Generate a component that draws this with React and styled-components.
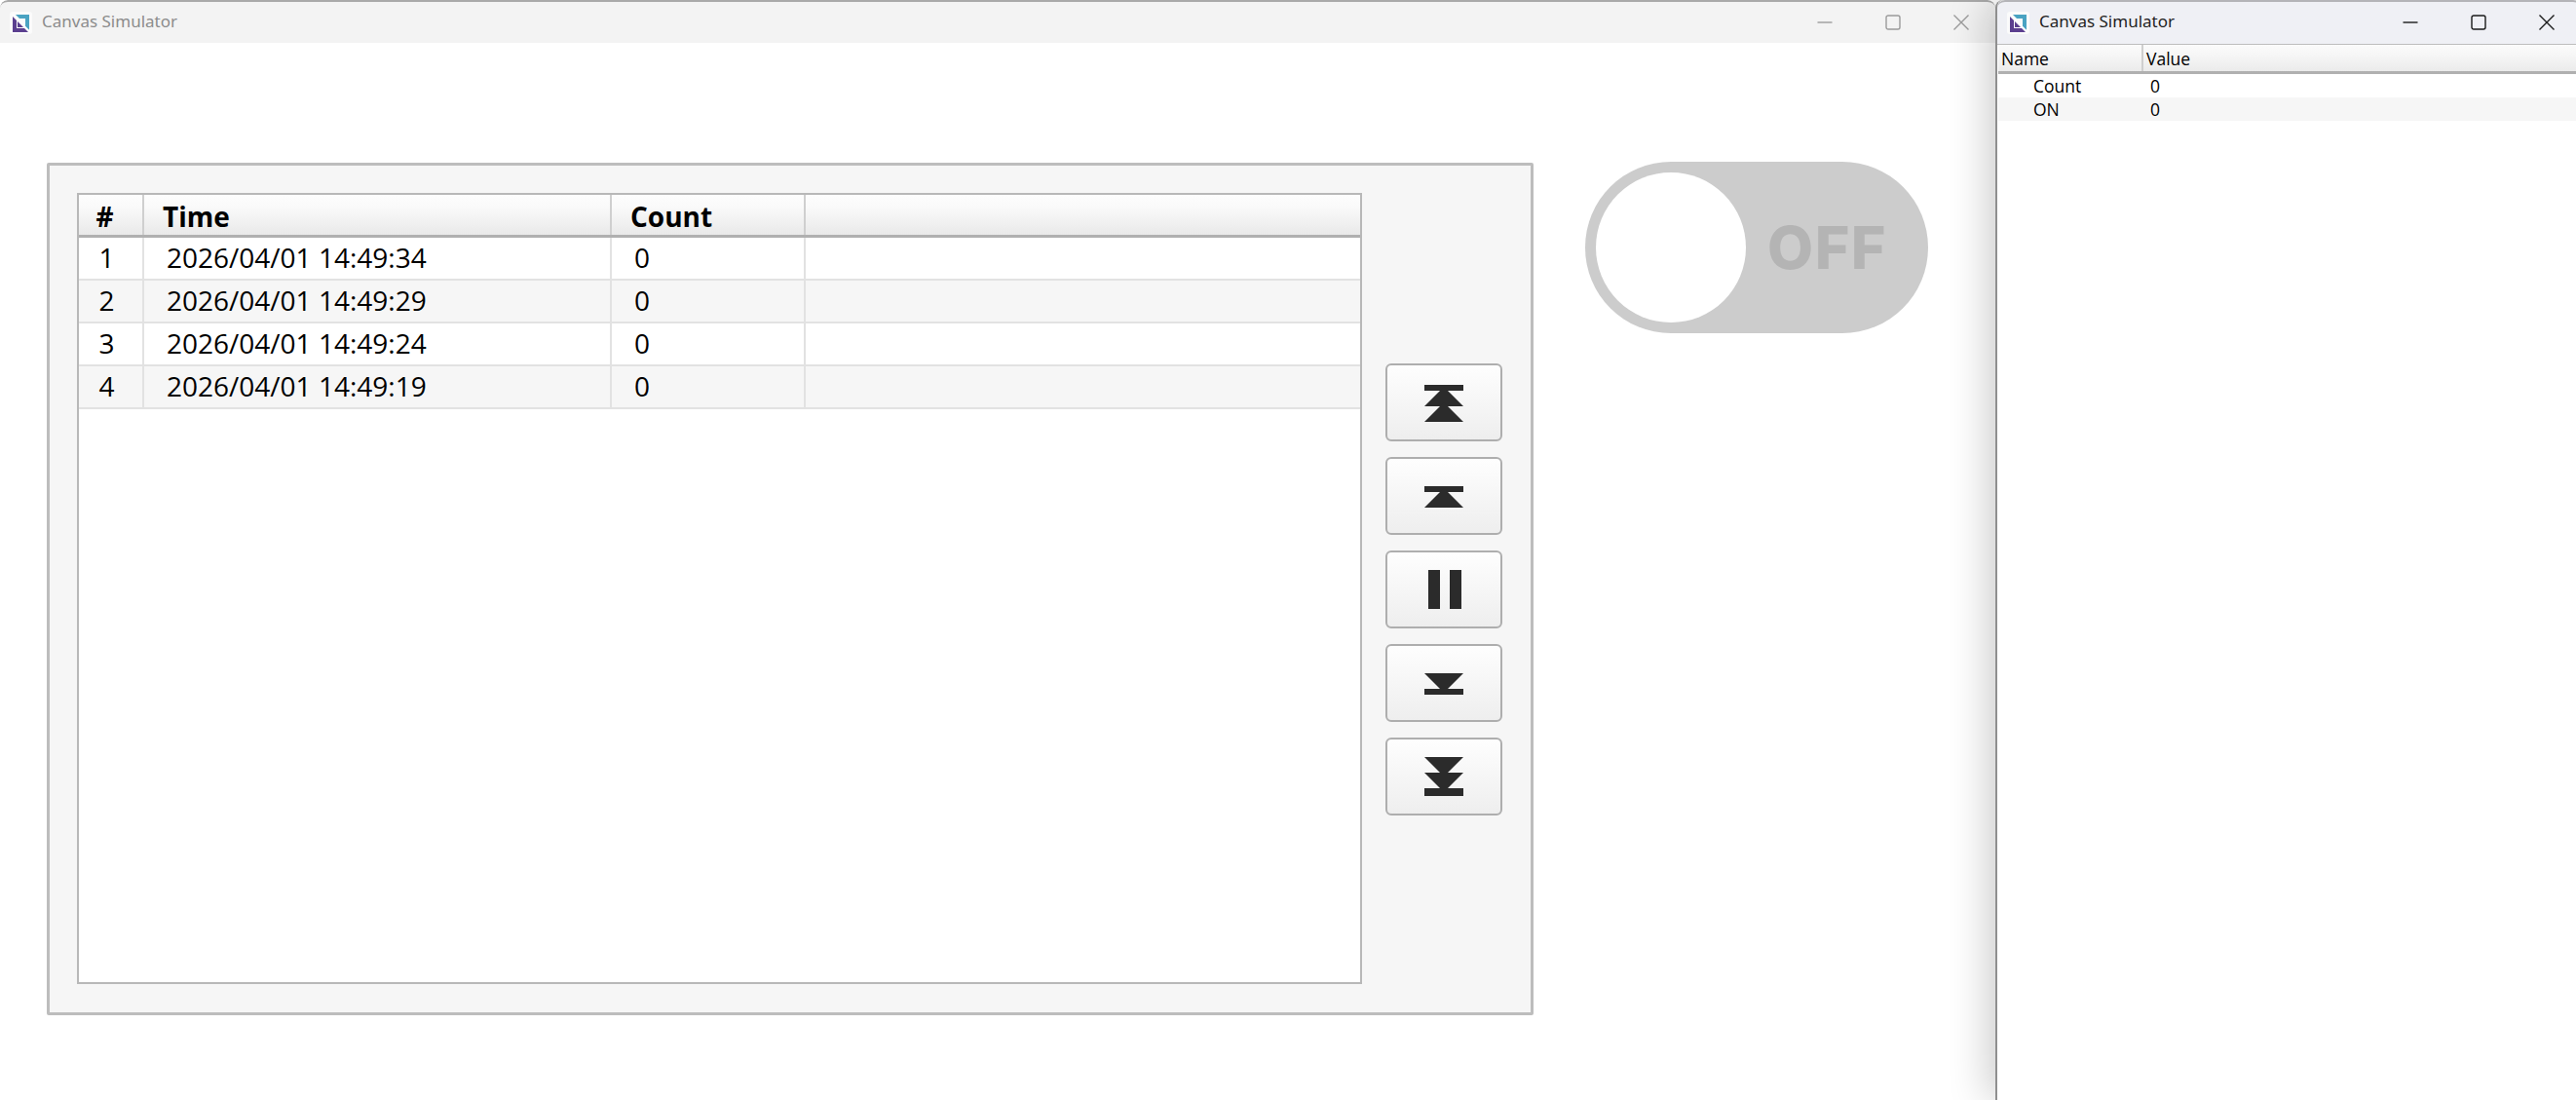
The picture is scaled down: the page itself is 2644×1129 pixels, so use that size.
import React from 'react';
import styled, { createGlobalStyle } from 'styled-components';

const GlobalStyle = createGlobalStyle`
  html, body {
    margin: 0;
    padding: 0;
    background: #fff;
    overflow: hidden;
  }
  * {
    box-sizing: border-box;
  }
`;

const Desktop = styled.div`
  display: flex;
  width: 2644px;
  height: 1129px;
  overflow: hidden;
  font-family: "Open Sans", "Noto Sans", sans-serif;
  color: #000;
`;

const Window = styled.div`
  flex: ${(p) => (p.$side ? '0 0 601px' : '0 0 2048px')};
  display: flex;
  flex-direction: column;
  min-width: 0;
  background: #fff;
  overflow: hidden;
  border-top-left-radius: 8px;
  border-top-right-radius: 8px;
  position: relative;
  z-index: ${(p) => (p.$side ? 1 : 0)};
  ${(p) =>
    p.$side &&
    `
    overflow: visible;
    border-left: 2px solid #8f8f8f;
    box-shadow: -8px 0 40px rgba(0, 0, 0, 0.2);
  `}
`;

const TitleBar = styled.div`
  flex: 0 0 44px;
  display: flex;
  align-items: center;
  border-top: 2px solid ${(p) => (p.$active ? '#b4b4b8' : '#a9a9a9')};
  background: ${(p) => (p.$active ? '#eff0f5' : '#f3f3f3')};
  border-bottom: ${(p) => (p.$active ? '1px solid #bdbdbd' : 'none')};
  border-top-left-radius: 8px;
  border-top-right-radius: 8px;
  padding-left: 10px;
  padding-bottom: ${(p) => (p.$active ? '1px' : '0')};
`;

const AppIcon = styled.svg`
  width: 23px;
  height: 23px;
  flex: none;
`;

const TitleText = styled.span`
  margin-left: 10px;
  padding-bottom: 3px;
  font-family: "Noto Sans", "Open Sans", sans-serif;
  font-size: 17px;
  color: ${(p) => (p.$active ? '#1f1f1f' : '#8c8c8c')};
  flex: 1;
`;

const WindowControls = styled.div`
  display: flex;
  align-items: center;
`;

const ControlButton = styled.div`
  width: 70px;
  height: 42px;
  display: flex;
  align-items: center;
  justify-content: center;
  color: ${(p) => (p.$active ? '#1a1a1a' : '#9b9b9b')};
`;

const ControlIcon = styled.svg`
  width: 16px;
  height: 16px;
  fill: none;
  stroke: currentColor;
  stroke-width: 1.4;
`;

const Content = styled.div`
  flex: 1;
  display: flex;
  align-items: flex-start;
  gap: 53px;
  padding: 123px 0 0 48px;
`;

const Panel = styled.div`
  flex: 0 0 1526px;
  height: 875px;
  display: flex;
  align-items: center;
  gap: 24px;
  padding: 28px;
  background: #f6f6f6;
  border: 3px solid #bdbdbd;
  border-radius: 2px;
`;

const TablePane = styled.div`
  flex: 0 0 1319px;
  height: 812px;
  align-self: flex-start;
  display: flex;
  flex-direction: column;
  background: #fff;
  border: 2px solid #b8b8b8;
`;

const HeaderRow = styled.div`
  flex: 0 0 44px;
  display: flex;
  background: linear-gradient(#fdfdfd, #fafafa 30%, #e9e9e9);
  border-bottom: 3px solid #b0b0b0;
`;

const BodyRow = styled.div`
  flex: 0 0 44px;
  display: flex;
  background: ${(p) => (p.$odd ? '#f6f6f6' : '#fff')};
  border-bottom: 2px solid #e2e2e2;
`;

const columnWidths = { index: 67, time: 480, count: 199, rest: 569 };

const HeaderCell = styled.div`
  flex: 0 0 ${(p) => columnWidths[p.$col]}px;
  display: flex;
  align-items: center;
  justify-content: ${(p) => (p.$col === 'index' ? 'center' : 'flex-start')};
  padding: ${(p) => (p.$col === 'index' ? '2px 12px 0 0' : '2px 0 0 19px')};
  font-size: 28px;
  font-weight: 700;
  border-right: ${(p) => (p.$col === 'rest' ? 'none' : '2px solid #cfcfcf')};
`;

const Cell = styled.div`
  flex: 0 0 ${(p) => columnWidths[p.$col]}px;
  display: flex;
  align-items: center;
  justify-content: ${(p) => (p.$col === 'index' ? 'center' : 'flex-start')};
  padding: ${(p) => (p.$col === 'index' ? '0 8px 2px 0' : '0 0 2px 23px')};
  font-size: 28px;
  border-right: ${(p) => (p.$col === 'rest' ? 'none' : '2px solid #e2e2e2')};
`;

const ButtonStack = styled.div`
  display: flex;
  flex-direction: column;
  gap: 16px;
`;

const NavButton = styled.div`
  width: 120px;
  height: 80px;
  display: flex;
  align-items: center;
  justify-content: center;
  background: linear-gradient(#fefefe, #eeeeee);
  border: 2px solid #aeaeae;
  border-radius: 6px;
`;

const NavIcon = styled.svg`
  width: 40px;
  height: 42px;
  fill: #2b2b2b;
`;

const Toggle = styled.div`
  flex: none;
  width: 352px;
  height: 176px;
  margin-top: -1px;
  padding: 11px;
  display: flex;
  align-items: center;
  background: #cccccc;
  border-radius: 88px;
`;

const ToggleKnob = styled.div`
  width: 154px;
  height: 154px;
  border-radius: 50%;
  background: #fff;
`;

const ToggleLabel = styled.span`
  margin-left: 22px;
  font-family: Inter, "Open Sans", sans-serif;
  font-size: 61px;
  line-height: 1;
  letter-spacing: 1.5px;
  font-weight: 800;
  color: #b4b4b4;
`;

const PropHeader = styled.div`
  flex: 0 0 30px;
  display: flex;
  background: linear-gradient(#fbfbfb, #f6f6f6 40%, #ebebeb);
  border-bottom: 3px solid #b0b0b0;
  margin-left: 1px;
`;

const PropHeaderCell = styled.div`
  flex: ${(p) => (p.$name ? '0 0 149px' : '1')};
  display: flex;
  align-items: center;
  padding-left: 3px;
  font-size: 17.5px;
  border-right: ${(p) => (p.$name ? '2px solid #cfcfcf' : 'none')};
`;

const PropRow = styled.div`
  flex: 0 0 24px;
  display: flex;
  align-items: center;
  margin-left: 1px;
  line-height: 24px;
  background: ${(p) => (p.$odd ? '#f6f6f6' : '#fff')};
  font-size: 17.5px;
`;

const PropName = styled.div`
  flex: 0 0 156px;
  padding-left: 36px;
`;

const PropValue = styled.div`
  flex: 1;
`;

const logo = (
  <>
    <rect width="23" height="23" rx="3" fill="#fbfbfb" />
    <path d="M6 3h14v16l-4-4V7H10z" fill="#4aa3c2" />
    <path d="M3 5l4 4v8h8l4 4H3z" fill="#5b3f8f" />
    <path d="M8 10l6 6H8z" fill="#5b3f8f" />
    <path d="M2.5 2.5l18 18" stroke="#fff" strokeWidth="1.2" />
  </>
);

const rows = [
  ['1', '2026/04/01 14:49:34', '0'],
  ['2', '2026/04/01 14:49:29', '0'],
  ['3', '2026/04/01 14:49:24', '0'],
  ['4', '2026/04/01 14:49:19', '0'],
];

const navIcons = [
  // skip to start
  <NavIcon viewBox="0 0 40 42" key="first">
    <path d="M0 3h40v6H0z" />
    <path d="M20 5l20 20H0z" />
    <path d="M20 21l20 20H0z" />
  </NavIcon>,
  // step back
  <NavIcon viewBox="0 0 40 42" key="prev">
    <path d="M0 11h40v6H0z" />
    <path d="M20 13l20 20H0z" />
  </NavIcon>,
  // pause
  <NavIcon viewBox="0 0 40 42" key="pause">
    <path d="M4 1h12v40H4zM26 1h12v40H26z" />
  </NavIcon>,
  // step forward
  <NavIcon viewBox="0 0 40 42" key="next">
    <path d="M0 11h40L20 31z" />
    <path d="M0 27h40v6H0z" />
  </NavIcon>,
  // skip to end
  <NavIcon viewBox="0 0 40 42" key="last">
    <path d="M0 1h40L20 21z" />
    <path d="M0 17h40L20 37z" />
    <path d="M0 33h40v8H0z" />
  </NavIcon>,
];

function Controls({ active }) {
  return (
    <WindowControls>
      <ControlButton $active={active}>
        <ControlIcon viewBox="0 0 16 16">
          <path d="M0.5 8h15" />
        </ControlIcon>
      </ControlButton>
      <ControlButton $active={active}>
        <ControlIcon viewBox="0 0 16 16">
          <rect x="1" y="1" width="14" height="14" rx="2" />
        </ControlIcon>
      </ControlButton>
      <ControlButton $active={active}>
        <ControlIcon viewBox="0 0 16 16">
          <path d="M0.5 0.5l15 15M15.5 0.5l-15 15" />
        </ControlIcon>
      </ControlButton>
    </WindowControls>
  );
}

export default function App() {
  return (
    <>
      <GlobalStyle />
      <Desktop>
        <Window>
          <TitleBar>
            <AppIcon viewBox="0 0 23 23">{logo}</AppIcon>
            <TitleText>Canvas Simulator</TitleText>
            <Controls />
          </TitleBar>
          <Content>
            <Panel>
              <TablePane>
                <HeaderRow>
                  <HeaderCell $col="index">#</HeaderCell>
                  <HeaderCell $col="time">Time</HeaderCell>
                  <HeaderCell $col="count">Count</HeaderCell>
                  <HeaderCell $col="rest" />
                </HeaderRow>
                {rows.map((r, i) => (
                  <BodyRow key={r[0]} $odd={i % 2 === 1}>
                    <Cell $col="index">{r[0]}</Cell>
                    <Cell $col="time">{r[1]}</Cell>
                    <Cell $col="count">{r[2]}</Cell>
                    <Cell $col="rest" />
                  </BodyRow>
                ))}
              </TablePane>
              <ButtonStack>
                {navIcons.map((icon) => (
                  <NavButton key={icon.key}>{icon}</NavButton>
                ))}
              </ButtonStack>
            </Panel>
            <Toggle>
              <ToggleKnob />
              <ToggleLabel>OFF</ToggleLabel>
            </Toggle>
          </Content>
        </Window>
        <Window $side>
          <TitleBar $active>
            <AppIcon viewBox="0 0 23 23">{logo}</AppIcon>
            <TitleText $active>Canvas Simulator</TitleText>
            <Controls active />
          </TitleBar>
          <PropHeader>
            <PropHeaderCell $name>Name</PropHeaderCell>
            <PropHeaderCell>Value</PropHeaderCell>
          </PropHeader>
          <PropRow>
            <PropName>Count</PropName>
            <PropValue>0</PropValue>
          </PropRow>
          <PropRow $odd>
            <PropName>ON</PropName>
            <PropValue>0</PropValue>
          </PropRow>
        </Window>
      </Desktop>
    </>
  );
}
